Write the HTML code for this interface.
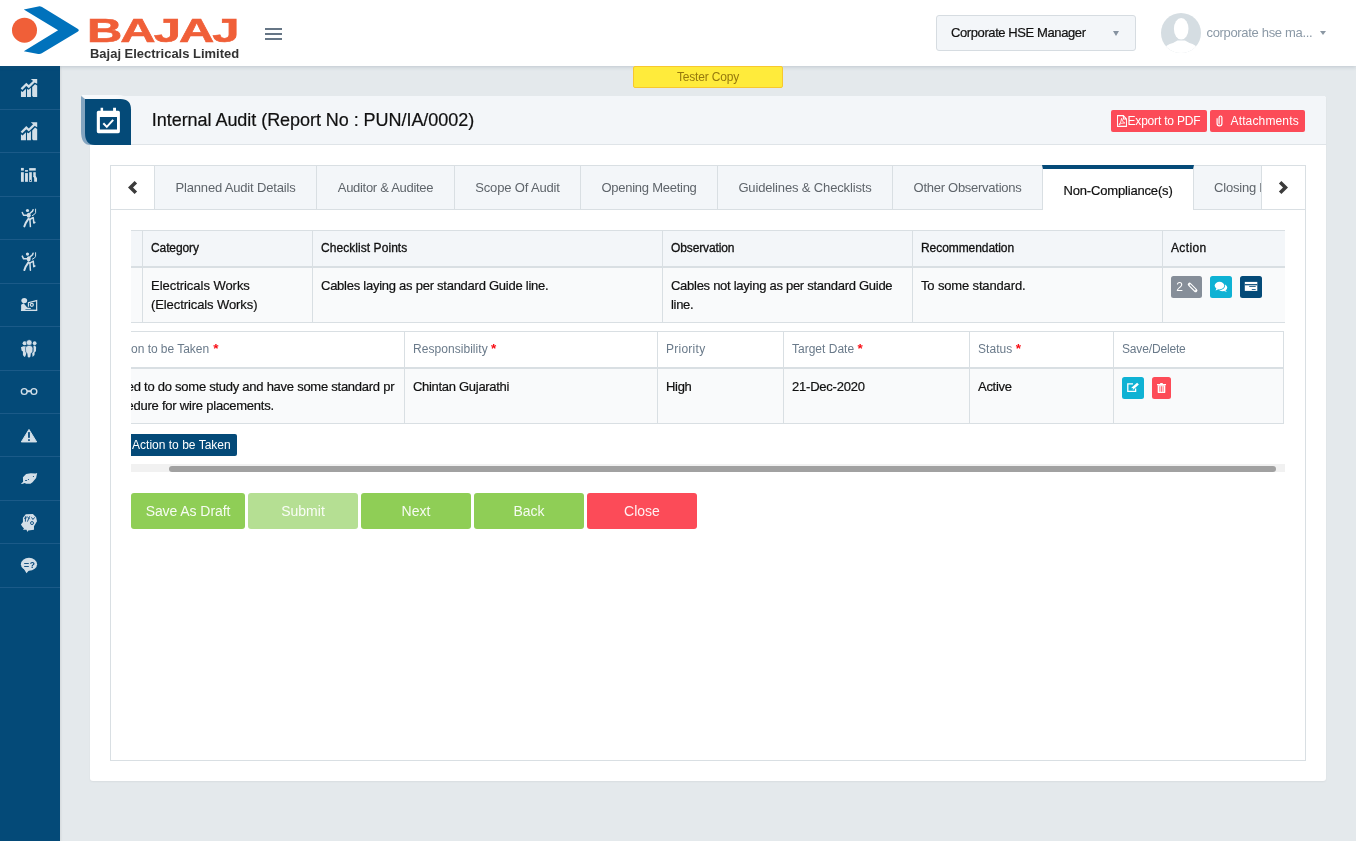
<!DOCTYPE html>
<html lang="en">
<head>
<meta charset="utf-8">
<title>Internal Audit</title>
<style>
*{box-sizing:border-box;margin:0;padding:0}
html,body{width:1356px;height:841px;overflow:hidden}
body{will-change:transform;font-family:"Liberation Sans",Arial,sans-serif;font-size:13px;color:#111;background:#e4e9ec;position:relative}
.t{white-space:nowrap}
/* header */
#hdr{position:absolute;left:0;top:0;width:1356px;height:66px;background:#fff;box-shadow:0 1px 4px rgba(60,80,100,.22);z-index:5}
#logo{position:absolute;left:0;top:0}
#brand{position:absolute;left:87.3px;top:13.4px;font-weight:bold;font-size:32.6px;line-height:36px;color:#f05f38;transform-origin:0 0;transform:scaleX(1.5);letter-spacing:-1.3px;-webkit-text-stroke:.6px #f05f38;white-space:nowrap}
#brand2{position:absolute;left:89.6px;top:47px;font-weight:bold;font-size:12px;line-height:14px;color:#333;white-space:nowrap;transform-origin:0 0;transform:scaleX(1.08)}
#burger{position:absolute;left:265px;top:28px;width:17px;height:13px}
#burger i{position:absolute;left:0;width:17px;height:2px;background:#667686}
#role{position:absolute;left:936px;top:15px;width:200px;height:36px;border:1px solid #d6dce1;border-radius:3px;background:#f3f6f9}
#role span{-webkit-text-stroke:.2px;position:absolute;left:14px;top:9px;font-size:13px;line-height:16px;color:#111;white-space:nowrap}
.caret{position:absolute;width:0;height:0;border-left:4px solid transparent;border-right:4px solid transparent;border-top:5px solid #6f7d8a}
#avatar{position:absolute;left:1161px;top:13px;width:40px;height:40px;border-radius:50%;background:#d5dde2;overflow:hidden}
#uname{position:absolute;left:1206.5px;top:25px;font-size:13px;line-height:16px;color:#8b99a6;white-space:nowrap}
/* sidebar */
#side{position:absolute;left:0;top:66px;width:60px;height:775px;background:#044a78;box-shadow:1px 0 2px rgba(0,0,0,.08)}
#sicons{position:absolute;left:0;top:0}
/* tester */
#tester{z-index:6;position:absolute;left:633px;top:66px;width:150px;height:22px;background:#ffeb3b;border:1px solid #f7c82e;border-radius:2px;color:#96790d;font-size:12px;text-align:center;line-height:20px}
/* card */
#card{position:absolute;left:90px;top:96px;width:1236px;height:685px;background:#fff;border-radius:3px;box-shadow:0 1px 2px rgba(0,0,0,.05)}
#band{position:absolute;left:0;top:0;width:1236px;height:49px;border-radius:3px 3px 0 0;background:#f3f6f9;border-bottom:1px solid #dfe4e8}
#ribbon{position:absolute;left:-9px;top:0;width:50px;height:49px}
#title{-webkit-text-stroke:.2px;position:absolute;left:61.8px;top:12px;font-size:18px;line-height:24px;color:#111;white-space:nowrap}
.rbtn{position:absolute;top:14px;height:22px;background:#fc4b58;border-radius:2px;color:#fff;font-size:12px;line-height:22px;white-space:nowrap}
.rbtn .t{position:absolute;top:0}
.bi{position:absolute}
#x_export{left:16.5px}#x_attach{left:20.5px}
#x_h2_act{margin-left:2.2px}#x_c2_act1{margin-left:1.7px}#x_c2_act2{margin-left:4.1px}
/* panel */
#panel{position:absolute;left:20px;top:69px;width:1196px;height:596px;border:1px solid #d9dfe3;background:#fff}
#tabs{position:absolute;left:0;top:0;width:1194px;height:44px;border-bottom:1px solid #d9dfe3;background:#f3f6f9}
.tab{position:absolute;top:0;height:43px;border-right:1px solid #d9dfe3;color:#5f656b;font-size:13px;line-height:43px;text-align:center;white-space:nowrap;overflow:hidden}
.tab.act{-webkit-text-stroke:.2px;background:#fff;color:#111;top:-1px;border-top:4px solid #044a78;border-left:1px solid #d9dfe3;height:45px;line-height:43px}
.arrow{position:absolute;top:0;height:43px;background:#fff}
/* tables */
#scroll{position:absolute;left:20px;top:64px;width:1154px;height:244px;overflow:hidden}
table{border-collapse:collapse;position:absolute;table-layout:fixed}
td,th{border:1px solid #d9dfe3;font-size:13px;font-weight:normal;text-align:left;vertical-align:top;padding:8px 8px;line-height:19px}
#t1 th{font-size:12px;background:#f3f6f9;color:#111;border-bottom:2px solid #d9dfe3;-webkit-text-stroke:.3px #111}
#t1 td{background:#f9fafb;-webkit-text-stroke:.2px}
#t2 th{font-size:12px;background:#fff;color:#6a7a8a;border-bottom:2px solid #d9dfe3}
#t2 td{background:#f9fafb;-webkit-text-stroke:.2px}
.req{color:#f80d14;font-weight:bold;font-size:13.5px;line-height:12px;margin-left:1.6px;position:relative;top:-.5px}
.sb{position:absolute;height:22px;border-radius:2.5px;overflow:hidden}
.sb svg{position:absolute;left:0;top:0}
#abtn{position:absolute;left:-11px;top:204px;width:117px;height:22px;background:#044a78;color:#fff;font-size:12px;line-height:22px;border-radius:2px;white-space:nowrap}
#abtn .t{position:absolute;left:12px;top:0}
#sbar{position:absolute;left:0;top:234px;width:1154px;height:8px;background:#f1f1f1}
#sbar i{position:absolute;left:38px;top:1.5px;width:1107px;height:6px;background:#a1a1a1;border-radius:3px}
.big{position:absolute;top:327px;height:36px;border-radius:3px;color:rgba(255,255,255,.92);font-size:14px;line-height:36px;text-align:center}
#x_abtn{letter-spacing:0.013px}
#x_attach{letter-spacing:0.144px}
#x_b1{letter-spacing:-0.066px}
#x_c2_act1{letter-spacing:-0.256px}
#x_c2_act2{letter-spacing:-0.217px}
#x_c2_pri{letter-spacing:-0.300px}
#x_c2_resp{letter-spacing:-0.296px}
#x_c2_sta{letter-spacing:-0.288px}
#x_c2_tgt{letter-spacing:-0.216px}
#x_c_cat1{letter-spacing:-0.036px}
#x_c_cat2{letter-spacing:-0.090px}
#x_c_chk{letter-spacing:-0.254px}
#x_c_obs1{letter-spacing:-0.273px}
#x_c_obs2{letter-spacing:-0.315px}
#x_c_rec{letter-spacing:-0.148px}
#x_export{letter-spacing:-0.186px}
#x_h2_act{letter-spacing:-0.035px}
#x_h2_pri{letter-spacing:0.257px}
#x_h2_resp{letter-spacing:0.050px}
#x_h2_sav{letter-spacing:-0.162px}
#x_h2_sta{letter-spacing:0.052px}
#x_h2_tgt{letter-spacing:0.007px}
#x_h_act{letter-spacing:0.360px}
#x_h_cat{letter-spacing:-0.100px}
#x_h_chk{letter-spacing:0.060px}
#x_h_obs{letter-spacing:-0.126px}
#x_h_rec{letter-spacing:-0.069px}
#x_role{letter-spacing:-0.405px}
#x_tab1{letter-spacing:-0.171px}
#x_tab2{letter-spacing:-0.293px}
#x_tab3{letter-spacing:-0.163px}
#x_tab4{letter-spacing:-0.257px}
#x_tab5{letter-spacing:-0.144px}
#x_tab6{letter-spacing:-0.272px}
#x_tab7{letter-spacing:-0.169px}
#x_tab8{letter-spacing:-0.200px}
#x_tester{letter-spacing:-0.162px}
#x_title{letter-spacing:-0.046px}
#x_uname{letter-spacing:-0.330px}
</style>
</head>
<body>
<div id="hdr">
<svg id="logo" width="85" height="66" viewBox="0 0 85 66">
<circle cx="24.5" cy="30.2" r="12.5" fill="#f05f38"/>
<path d="M23.8 9.4 L38.3 6.4 Q40.3 6 42 7.1 L77.6 28.7 Q80 30.2 77.6 31.7 L41.8 53.3 Q40.2 54.4 38.2 54 L23.8 51.2 L58.1 30.2 Z" fill="#0072bc"/>
</svg>
<div id="brand"><span class="t" id="x_brand">BAJAJ</span></div>
<div id="brand2"><span class="t" id="x_brand2">Bajaj Electricals Limited</span></div>
<div id="burger"><i style="top:0"></i><i style="top:5px"></i><i style="top:10px"></i></div>
<div id="role"><span class="t" id="x_role">Corporate HSE Manager</span><b class="caret" style="left:176px;top:15px;border-left-width:3.5px;border-right-width:3.5px;border-top-color:#8592a0"></b></div>
<div id="avatar"><svg width="40" height="40" viewBox="0 0 40 40"><ellipse cx="20.2" cy="15.8" rx="7.3" ry="10.8" fill="#fff"/><path d="M2 37 Q5 31.5 12 30 L16.5 27.5 H24 L28.5 30 Q35 31.5 38 37 V40 H2 Z" fill="#fff"/></svg></div>
<div id="uname"><span class="t" id="x_uname">corporate hse ma...</span></div>
<b class="caret" style="left:1320px;top:30.5px;border-left-width:3px;border-right-width:3px;border-top:4px solid #8b97a3"></b>
</div>

<div id="side">
<svg id="sicons" width="60" height="775" viewBox="0 66 60 775" fill="#d3dfe8">
<polygon points="20.96,90.91 22.56,91.98 25.95,88.77 25.95,96.97 20.96,96.97"/>
<polygon points="27.02,89.12 28.63,89.84 30.94,87.70 30.94,96.97 27.02,96.97"/>
<polygon points="32.19,86.98 35.05,84.13 37.19,85.56 37.19,96.97 33.26,96.97 32.19,95.90"/>
<polyline points="21.49,89.12 26.31,84.31 28.80,86.63 34.33,81.27" fill="none" stroke="#d3dfe8" stroke-width="2.3"/>
<polygon points="30.77,78.96 37.19,78.96 37.19,83.77 34.87,82.70 32.55,80.38"/>
<polygon points="20.96,134.31 22.56,135.38 25.95,132.17 25.95,140.37 20.96,140.37"/>
<polygon points="27.02,132.52 28.63,133.24 30.94,131.10 30.94,140.37 27.02,140.37"/>
<polygon points="32.19,130.38 35.05,127.53 37.19,128.96 37.19,140.37 33.26,140.37 32.19,139.30"/>
<polyline points="21.49,132.52 26.31,127.71 28.80,130.03 34.33,124.67" fill="none" stroke="#d3dfe8" stroke-width="2.3"/>
<polygon points="30.77,122.36 37.19,122.36 37.19,127.17 34.87,126.10 32.55,123.78"/>
<rect x="20.96" y="167.92" width="2.85" height="2.68"/>
<rect x="20.96" y="172.20" width="2.85" height="9.63"/>
<rect x="25.06" y="170.06" width="2.85" height="1.61"/>
<rect x="25.06" y="173.09" width="2.85" height="8.74"/>
<rect x="29.16" y="168.10" width="6.60" height="2.50"/>
<rect x="29.16" y="172.20" width="2.68" height="9.63"/>
<rect x="33.26" y="172.20" width="2.50" height="4.64"/>
<polygon points="33.26,176.12 35.76,176.12 37.01,178.26 37.01,181.83 34.15,181.83 34.15,178.26"/>
<circle cx="30.48" cy="180.47" r="0.6" fill="#05477b"/>
<circle cx="27.48" cy="210.49" r="1.6"/>
<ellipse cx="28.70" cy="215.27" rx="2" ry="2.6"/>
<g fill="none" stroke="#d3dfe8" stroke-linecap="round" stroke-linejoin="round">
<polyline points="22.28,212.52 23.56,215.27 27.56,215.27" stroke-width="1.5"/>
<polyline points="30.05,213.24 32.55,211.10 33.08,209.67" stroke-width="1.5"/>
<polyline points="35.58,209.13 35.58,212.70 34.51,214.31 32.37,215.56" stroke-width="1"/>
<polyline points="28.45,218.77 25.77,222.87 24.34,226.44" stroke-width="2"/>
<polyline points="29.87,219.12 30.41,226.61" stroke-width="1.5"/>
<polyline points="29.70,219.48 33.26,217.52 33.80,223.05 34.87,222.40" stroke-width="1.5"/>
</g>
<circle cx="27.48" cy="254.09" r="1.6"/>
<ellipse cx="28.70" cy="258.87" rx="2" ry="2.6"/>
<g fill="none" stroke="#d3dfe8" stroke-linecap="round" stroke-linejoin="round">
<polyline points="22.28,256.12 23.56,258.87 27.56,258.87" stroke-width="1.5"/>
<polyline points="30.05,256.84 32.55,254.70 33.08,253.27" stroke-width="1.5"/>
<polyline points="35.58,252.73 35.58,256.30 34.51,257.91 32.37,259.16" stroke-width="1"/>
<polyline points="28.45,262.37 25.77,266.47 24.34,270.04" stroke-width="2"/>
<polyline points="29.87,262.72 30.41,270.21" stroke-width="1.5"/>
<polyline points="29.70,263.08 33.26,261.12 33.80,266.65 34.87,266.00" stroke-width="1.5"/>
</g>
<ellipse cx="24.27" cy="300.59" rx="2.9" ry="2.7"/>
<polygon points="21.13,304.70 23.63,303.27 27.20,307.55 30.77,308.08 30.77,308.98 25.06,308.98 25.77,310.05 21.13,310.76"/>
<rect x="20.96" y="309.62" width="16.23" height="1.4"/>
<g fill="none" stroke="#d3dfe8" stroke-width="1.2">
<polyline points="28.45,306.84 28.45,302.73 36.65,300.59 36.65,310.40"/>
<circle cx="31.84" cy="304.87" r="1.5"/>
</g>
<circle cx="24.70" cy="343.24" r="2.1"/>
<circle cx="34.62" cy="343.17" r="1.9"/>
<polygon points="20.96,347.27 23.27,346.20 26.49,346.56 26.49,352.98 25.41,356.19 24.34,357.08 22.92,355.12 22.92,351.55 21.67,350.84"/>
<polygon points="33.44,345.84 35.05,345.49 36.12,347.27 35.94,351.19 34.69,352.26 34.51,355.12 32.55,356.90 32.19,352.98 33.44,351.55"/>
<circle cx="29.16" cy="342.63" r="2.9" stroke="#05477b" stroke-width=".6"/>
<polygon points="26.31,346.20 28.98,345.31 31.84,346.02 32.91,347.98 32.73,352.26 31.12,353.33 30.77,356.54 28.98,358.15 27.38,356.54 27.02,353.33 25.77,352.26 25.41,347.98" stroke="#05477b" stroke-width=".6"/>
<g fill="none" stroke="#d3dfe8" stroke-width="1.4">
<circle cx="24.24" cy="391.52" r="2.9"/>
<circle cx="33.90" cy="391.52" r="2.9"/>
</g>
<rect x="26.84" y="390.27" width="4.46" height="1.96"/>
<polygon points="28.98,429.45 36.65,441.94 21.31,441.94" stroke="#d3dfe8" stroke-width="1" stroke-linejoin="round"/>
<rect x="28.09" y="432.13" width="1.78" height="5.71" fill="#05477b"/>
<rect x="28.09" y="439.26" width="1.78" height="1.61" fill="#05477b"/>
<polygon points="20.96,483.87 23.10,481.73 22.92,477.27 26.13,474.06 30.77,473.17 35.40,473.52 37.19,472.99 36.12,477.98 32.55,482.26 30.41,483.87 26.13,483.87 24.70,482.98 22.03,484.12"/>
<circle cx="33.44" cy="476.48" r=".6" fill="#05477b"/>
<circle cx="28.45" cy="479.48" r=".6" fill="#05477b"/>
<rect x="25.06" y="480.12" width="2" height=".8" fill="#05477b"/>
<polygon points="20.96,524.48 22.92,521.98 22.92,517.70 25.77,514.31 32.91,513.96 36.12,517.34 37.01,521.27 33.98,526.26 33.98,529.83 28.27,530.54 27.38,531.97 26.49,529.83 22.92,529.83 23.99,528.40 22.20,526.62"/>
<g fill="none" stroke="#05477b" stroke-width=".9">
<polyline points="25.41,516.27 25.41,521.63"/>
<polyline points="24.17,518.41 26.84,517.70"/>
<polyline points="26.84,516.27 29.70,519.13"/>
<polyline points="29.70,516.27 27.38,521.63"/>
<polyline points="31.48,517.34 32.91,519.49 34.69,517.34"/>
<circle cx="32.01" cy="523.05" r="1.5"/>
</g>
<ellipse cx="28.98" cy="564.27" rx="8.1" ry="6.4"/>
<polygon points="23.63,568.55 26.49,573.19 29.34,569.98"/>
<rect x="24.17" y="563.02" width="4.64" height=".9" fill="#05477b"/>
<rect x="24.17" y="566.05" width="4.64" height=".9" fill="#05477b"/>
<text x="29.70" y="568.01" font-family="Liberation Sans, sans-serif" font-weight="bold" font-size="8.5" fill="#05477b">?</text>
<rect x="0" y="109" width="60" height="1" fill="#1b5a88"/><rect x="0" y="152" width="60" height="1" fill="#1b5a88"/><rect x="0" y="196" width="60" height="1" fill="#1b5a88"/><rect x="0" y="239" width="60" height="1" fill="#1b5a88"/><rect x="0" y="283" width="60" height="1" fill="#1b5a88"/><rect x="0" y="326" width="60" height="1" fill="#1b5a88"/><rect x="0" y="370" width="60" height="1" fill="#1b5a88"/><rect x="0" y="413" width="60" height="1" fill="#1b5a88"/><rect x="0" y="456" width="60" height="1" fill="#1b5a88"/><rect x="0" y="500" width="60" height="1" fill="#1b5a88"/><rect x="0" y="543" width="60" height="1" fill="#1b5a88"/><rect x="0" y="587" width="60" height="1" fill="#1b5a88"/></svg>
</div>

<div id="tester"><span class="t" id="x_tester">Tester Copy</span></div>

<div id="card">
<div id="band">
<div id="title"><span class="t" id="x_title">Internal Audit (Report No : PUN/IA/0002)</span></div>
<div class="rbtn" style="left:1021px;width:96px"><svg class="bi" style="left:5.5px;top:5px" width="10" height="12" viewBox="0 0 11 12" preserveAspectRatio="none"><path d="M.6 .6 H7 L10.4 4 V11.4 H.6 Z M7 .6 V4 H10.4" fill="none" stroke="#fff" stroke-width="1.1"/><path d="M2.3 9.6 Q4.6 7.6 5 3.4 Q5.6 7 8.6 8 Q5 7.6 2.3 9.6 Z" fill="none" stroke="#fff" stroke-width=".9"/></svg><span class="t" id="x_export">Export to PDF</span></div>
<div class="rbtn" style="left:1120px;width:95px"><svg class="bi" style="left:5.5px;top:4.5px" width="8" height="12" viewBox="0 0 8 12"><path d="M1.1 3.2 V8.6 Q1.1 10.9 3.5 10.9 Q5.9 10.9 5.9 8.6 V2.6 Q5.9 1 4.5 1 Q3.1 1 3.1 2.6 V8.2 Q3.1 8.9 3.6 8.9" fill="none" stroke="#fff" stroke-width="1.2"/></svg><span class="t" id="x_attach">Attachments</span></div>
</div>
<svg id="ribbon" viewBox="0 0 50 49" style="overflow:visible">
<linearGradient id="rg" x1="0" x2="1" y1="0" y2="0"><stop offset="0" stop-color="#f8fafc"/><stop offset=".7" stop-color="#f8fafc"/><stop offset="1" stop-color="#f3f6f9"/></linearGradient>
<path d="M0.6 -0.9 H36 Q44 -0.9 48 3 H4 Z" fill="url(#rg)"/>
<path d="M0 0 L4 3 H30 V49 H9.5 Q0 49 0 35 Z" fill="#82a4c0"/>
<path d="M4 3 H39.5 Q50 3 50 13.5 V49 H14 Q4 49 4 37 Z" fill="#044a78"/>
<path d="M17.3 14.7 H19.6 V11.8 H22.1 V14.7 H32.1 V11.8 H35 V14.7 H37.3 Q38.9 14.7 38.9 16.3 V35.6 Q38.9 37.2 37.3 37.2 H17.4 Q15.8 37.2 15.8 35.6 V16.3 Q15.8 14.7 17.4 14.7 Z M18.9 21.1 V33.6 H36 V21.1 Z" fill="#fff" fill-rule="evenodd"/>
<path d="M22.3 27.3 L25.8 30.9 L32.2 23.9" fill="none" stroke="#fff" stroke-width="2"/>
</svg>
<div id="panel">
<div id="tabs">
<div class="arrow" style="left:0;width:44px;border-right:1px solid #d9dfe3"></div>
<div class="tab" style="left:44px;width:162px"><span class="t" id="x_tab1">Planned Audit Details</span></div>
<div class="tab" style="left:206px;width:138px"><span class="t" id="x_tab2">Auditor &amp; Auditee</span></div>
<div class="tab" style="left:344px;width:126px"><span class="t" id="x_tab3">Scope Of Audit</span></div>
<div class="tab" style="left:470px;width:137px"><span class="t" id="x_tab4">Opening Meeting</span></div>
<div class="tab" style="left:607px;width:175px"><span class="t" id="x_tab5">Guidelines &amp; Checklists</span></div>
<div class="tab" style="left:782px;width:150px"><span class="t" id="x_tab6">Other Observations</span></div>
<div class="tab act" style="left:931px;width:152px"><span class="t" id="x_tab7">Non-Compliance(s)</span></div>
<div class="tab" style="left:1083px;width:67px;border-right:0;text-align:left;padding-left:20px"><span class="t" id="x_tab8">Closing Meeting</span></div>
<div class="arrow" style="left:1150px;width:44px;border-left:1px solid #d9dfe3"></div>
<svg style="position:absolute;left:0;top:0" width="1194" height="43" viewBox="0 0 1194 43"><polygon points="17,21.5 23.6,14.9 26.1,17.4 22,21.5 26.1,25.6 23.6,28.1" fill="#3b3b3b"/><polygon points="1177,21.5 1170.4,14.9 1167.9,17.4 1172,21.5 1167.9,25.6 1170.4,28.1" fill="#3b3b3b"/></svg>
</div>
<div id="scroll">
<table id="t1" style="left:-21px;top:0;width:1400px">
<colgroup><col style="width:32px"><col style="width:170px"><col style="width:350px"><col style="width:250px"><col style="width:250px"><col style="width:348px"></colgroup>
<tr><th></th><th><span class="t" id="x_h_cat">Category</span></th><th><span class="t" id="x_h_chk">Checklist Points</span></th><th><span class="t" id="x_h_obs">Observation</span></th><th><span class="t" id="x_h_rec">Recommendation</span></th><th><span class="t" id="x_h_act">Action</span></th></tr>
<tr style="height:55px"><td></td><td><span class="t" id="x_c_cat1">Electricals Works</span><br><span class="t" id="x_c_cat2">(Electricals Works)</span></td><td><span class="t" id="x_c_chk">Cables laying as per standard Guide line.</span></td><td><span class="t" id="x_c_obs1">Cables not laying as per standard Guide</span><br><span class="t" id="x_c_obs2">line.</span></td><td><span class="t" id="x_c_rec">To some standard.</span></td><td style="position:relative">
<span class="sb" style="left:8px;top:8px;width:31px;background:#868e99"><svg width="31" height="22" viewBox="0 0 31 22"><text x="5.2" y="14.9" font-family="Liberation Sans, sans-serif" font-size="12" fill="#fff">2</text><path d="M18.6 8.4 L24.6 14.4" stroke="#fff" stroke-width="3.6" stroke-linecap="round" fill="none"/><path d="M19.2 9 L24 13.8" stroke="#868e99" stroke-width="1.3" stroke-linecap="round" fill="none"/></svg></span>
<span class="sb" style="left:47px;top:8px;width:22px;background:#0fb2d4"><svg width="22" height="22" viewBox="0 0 22 22"><ellipse cx="12.6" cy="11.6" rx="4.6" ry="3.6" fill="#fff"/><path d="M15 14 L17 16 L14 15 Z" fill="#fff"/><ellipse cx="9.5" cy="9.6" rx="5.6" ry="4.6" fill="#0fb2d4"/><ellipse cx="9.5" cy="9.6" rx="4.8" ry="3.8" fill="#fff"/><path d="M6.5 12 L5.6 14.4 L9 13 Z" fill="#fff"/></svg></span>
<span class="sb" style="left:77px;top:8px;width:22px;background:#044a78"><svg width="22" height="22" viewBox="0 0 22 22"><rect x="4.8" y="5.9" width="12.5" height="9" fill="#fff"/><rect x="4.8" y="8.1" width="12.5" height="1.2" fill="#044a78"/><rect x="9.2" y="10.2" width="6.5" height=".8" fill="#044a78"/><rect x="11.8" y="13.1" width="3.9" height=".8" fill="#044a78"/></svg></span>
</td></tr>
</table>
<table id="t2" style="left:-31px;top:101px;width:1183px">
<colgroup><col style="width:304px"><col style="width:253px"><col style="width:126px"><col style="width:186px"><col style="width:144px"><col style="width:170px"></colgroup>
<tr><th><span class="t" id="x_h2_act">Action to be Taken</span> <b class="req" style="margin-left:.8px">*</b></th><th><span class="t" id="x_h2_resp">Responsibility</span> <b class="req" style="margin-left:-.2px">*</b></th><th><span class="t" id="x_h2_pri">Priority</span></th><th><span class="t" id="x_h2_tgt">Target Date</span> <b class="req" style="margin-left:.1px">*</b></th><th><span class="t" id="x_h2_sta">Status</span> <b class="req" style="margin-left:.1px">*</b></th><th><span class="t" id="x_h2_sav">Save/Delete</span></th></tr>
<tr style="height:55px"><td><span class="t" id="x_c2_act1">Need to do some study and have some standard pr</span><br><span class="t" id="x_c2_act2">ocedure for wire placements.</span></td><td><span class="t" id="x_c2_resp">Chintan Gujarathi</span></td><td><span class="t" id="x_c2_pri">High</span></td><td><span class="t" id="x_c2_tgt">21-Dec-2020</span></td><td><span class="t" id="x_c2_sta">Active</span></td><td style="position:relative">
<span class="sb" style="left:8px;top:8px;width:22px;background:#0fb2d4"><svg width="22" height="22" viewBox="0 0 22 22"><path d="M13.6 11.5 V14.3 H5.8 V6.9 H11" fill="none" stroke="#fff" stroke-width="1.3"/><path d="M10.2 11.8 L16 6.6" stroke="#fff" stroke-width="2.6" fill="none"/><circle cx="10.6" cy="11.5" r=".6" fill="#0fb2d4"/></svg></span>
<span class="sb" style="left:38px;top:8px;width:19px;background:#fd4b57"><svg width="19" height="22" viewBox="0 0 19 22"><path d="M5 7 H8 L8.4 6 H10.6 L11 7 H14 V8.2 H5 Z" fill="#fff"/><path d="M5.7 8.2 H13.3 V15.2 Q13.3 16.1 12.4 16.1 H6.6 Q5.7 16.1 5.7 15.2 Z" fill="#fff"/><rect x="7.5" y="9.2" width=".8" height="5.6" fill="#fd4b57"/><rect x="9.1" y="9.2" width=".8" height="5.6" fill="#fd4b57"/><rect x="10.7" y="9.2" width=".8" height="5.6" fill="#fd4b57"/></svg></span>
</td></tr>
</table>
<div id="abtn"><span class="t" id="x_abtn">Action to be Taken</span></div>
<div id="sbar"><i></i></div>
</div>
<div class="big" style="left:20px;width:114px;background:#8fce56"><span class="t" id="x_b1">Save As Draft</span></div>
<div class="big" style="left:137px;width:110px;background:#b5df93"><span class="t" id="x_b2">Submit</span></div>
<div class="big" style="left:250px;width:110px;background:#8fce56"><span class="t" id="x_b3">Next</span></div>
<div class="big" style="left:363px;width:110px;background:#8fce56"><span class="t" id="x_b4">Back</span></div>
<div class="big" style="left:476px;width:110px;background:#fc4b58"><span class="t" id="x_b5">Close</span></div>
</div>
</div>
</body>
</html>
